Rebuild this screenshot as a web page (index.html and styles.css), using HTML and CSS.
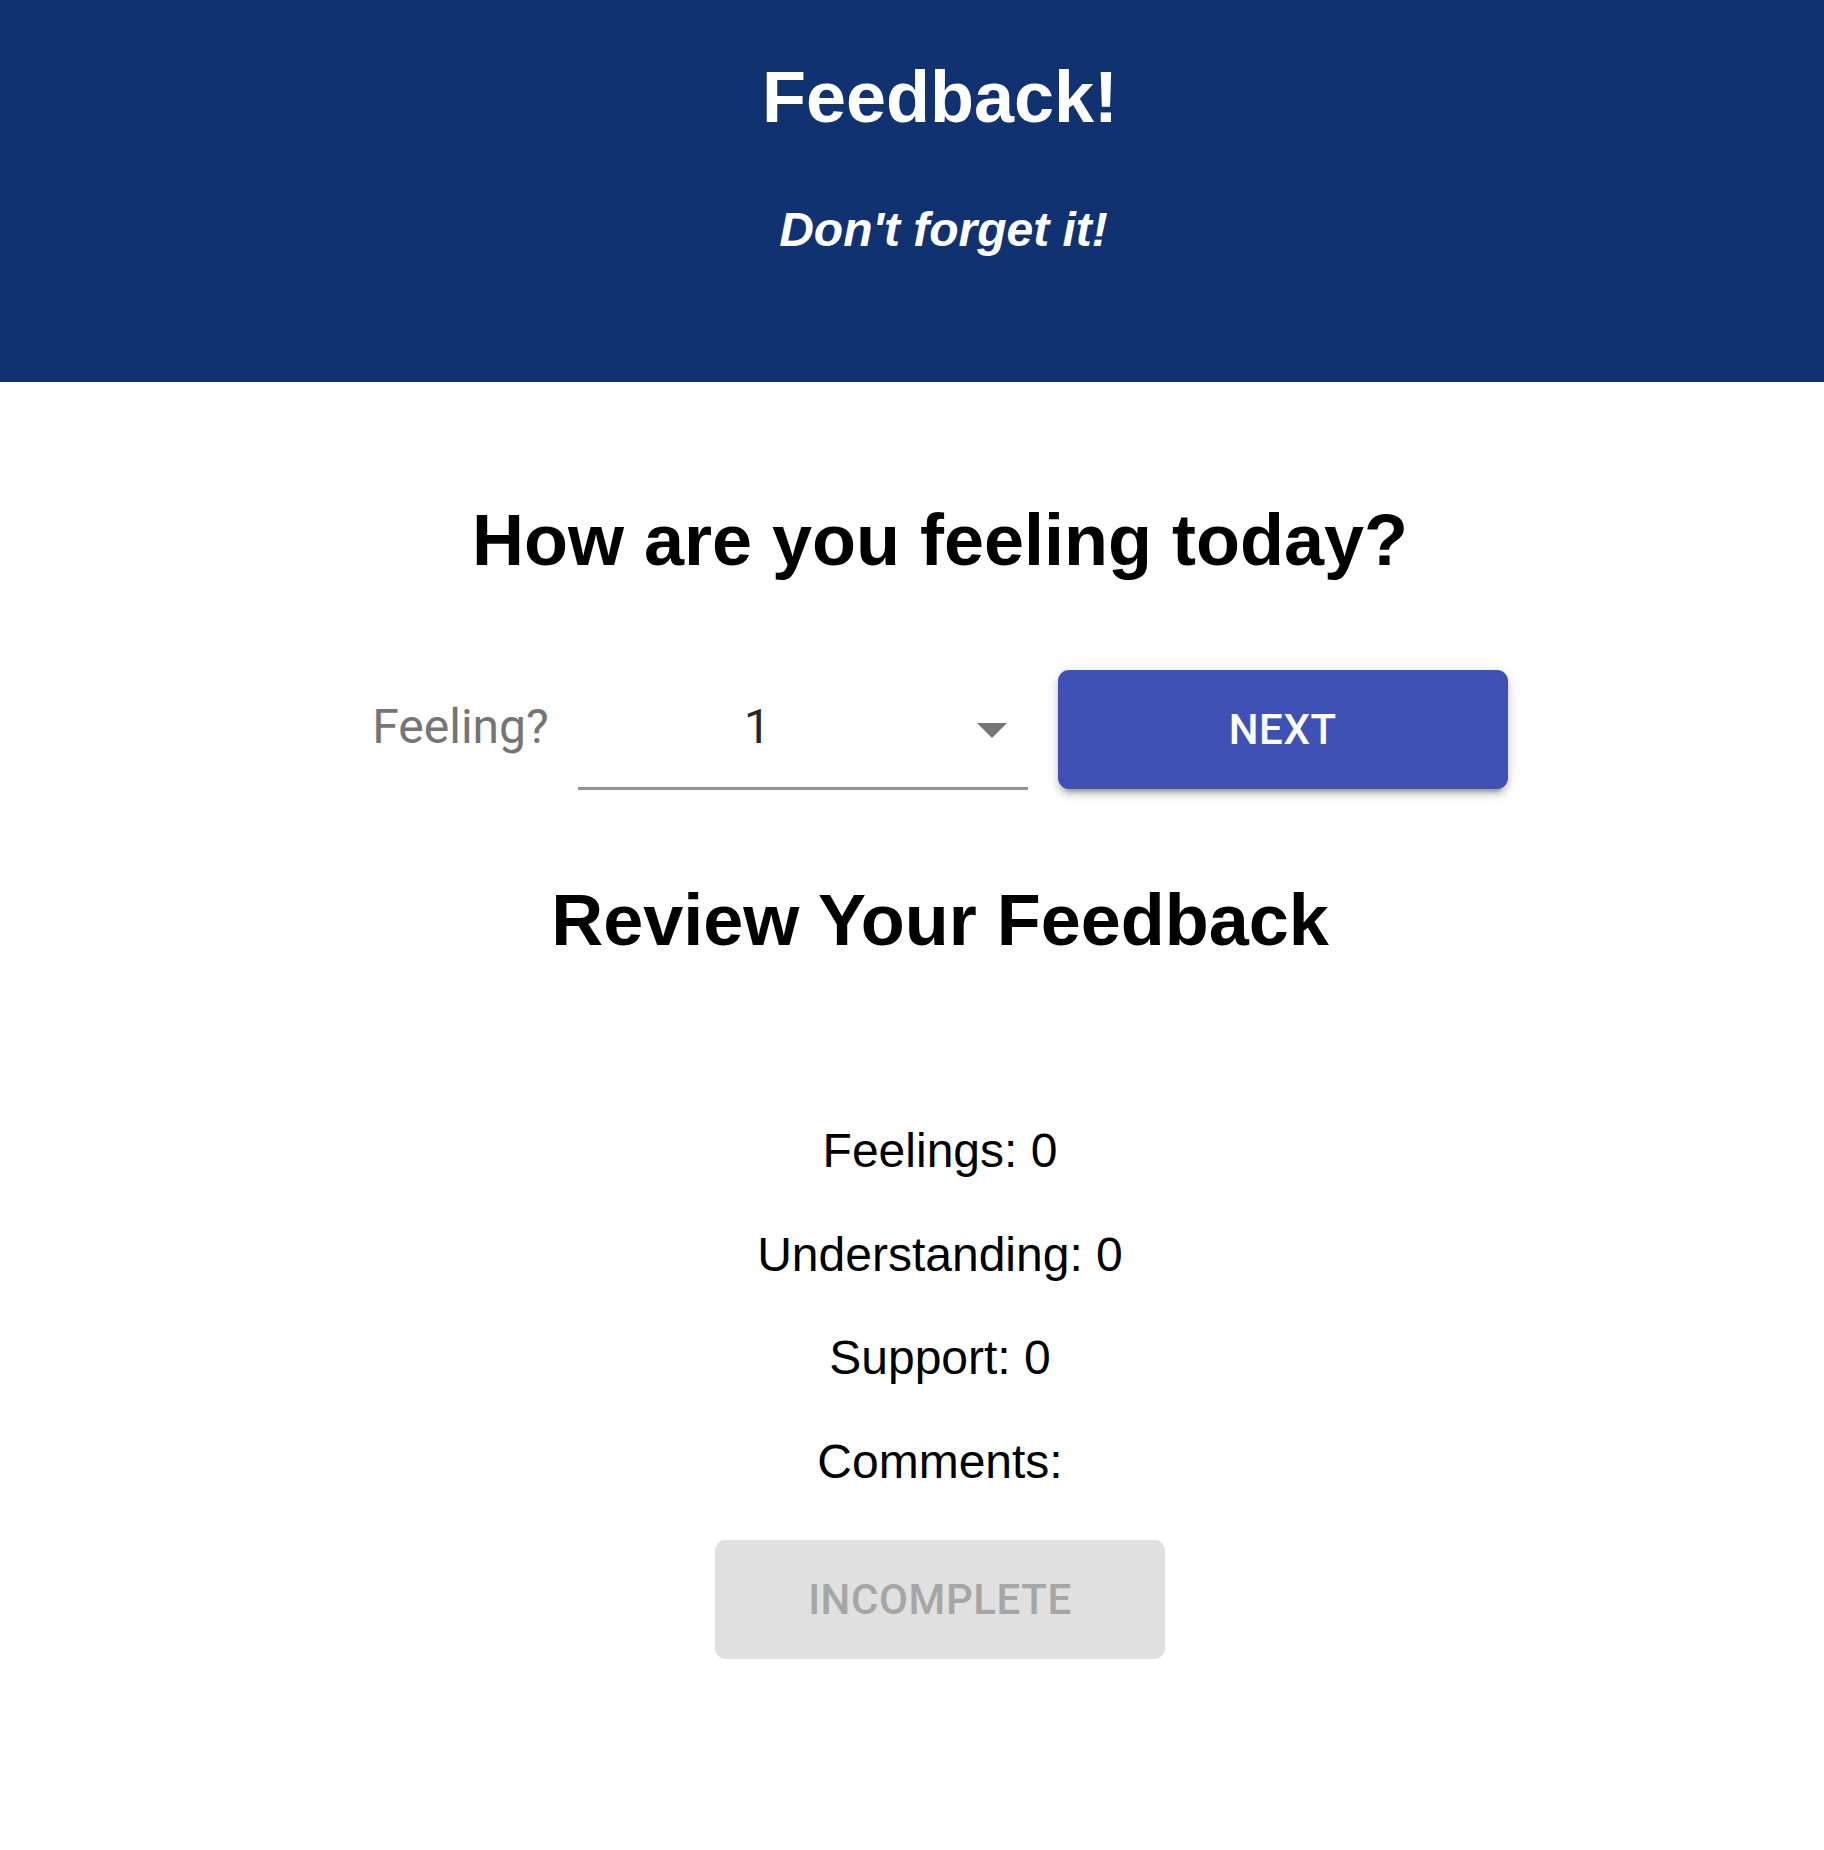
FILE: index.html
```html
<!DOCTYPE html>
<html lang="en">
<head>
<meta charset="utf-8">
<title>Feedback!</title>
<link rel="stylesheet" href="styles.css">
</head>
<body>
<header class="app-header">
  <h1 class="app-title">Feedback!</h1>
  <h4 class="app-subtitle">Don't forget it!</h4>
</header>
<main class="app-main">
  <h1 class="section-title title-feeling">How are you feeling today?</h1>
  <div class="form-row">
    <label class="field-label">Feeling?</label>
    <div class="select">
      <div class="select-value">1</div>
      <svg class="select-icon" viewBox="0 0 24 24" width="72" height="72" aria-hidden="true"><path d="M7 10l5 5 5-5z" fill="#757575"/></svg>
    </div>
    <button class="btn btn-primary">Next</button>
  </div>
  <h1 class="section-title title-review">Review Your Feedback</h1>
  <div class="review-list">
    <p class="review-item">Feelings: 0</p>
    <p class="review-item">Understanding: 0</p>
    <p class="review-item">Support: 0</p>
    <p class="review-item">Comments: </p>
  </div>
  <button class="btn btn-disabled" disabled>Incomplete</button>
</main>
</body>
</html>
```

FILE: styles.css
```css
html, body {
  margin: 0;
  padding: 0;
  background: #ffffff;
}

body {
  font-family: "Liberation Sans", Arial, Helvetica, sans-serif;
  color: #000000;
}

.app-header {
  background: #113271;
  height: 382px;
  box-sizing: border-box;
  padding: 61px 0 0 56px;
  text-align: center;
  color: #ffffff;
}

.app-title {
  margin: 0;
  font-size: 72px;
  line-height: 72px;
  font-weight: 700;
}

.app-subtitle {
  margin: 73px 0 0;
  padding-left: 7px;
  font-size: 48px;
  line-height: 48px;
  font-weight: 700;
  font-style: italic;
}

.app-main {
  padding: 0 0 100px 56px;
  display: flex;
  flex-direction: column;
  align-items: center;
}

.section-title {
  margin: 0;
  font-size: 72px;
  line-height: 72px;
  font-weight: 700;
  text-align: center;
}

.title-feeling {
  margin-top: 122px;
}

.form-row {
  margin-top: 94px;
  display: flex;
  align-items: flex-end;
  justify-content: center;
}

.field-label {
  font-family: Roboto, "Liberation Sans", sans-serif;
  font-size: 48px;
  line-height: 48px;
  color: #757575;
  margin: 0 29px 39px 0;
}

.select {
  width: 450px;
  height: 117px;
  border-bottom: 3px solid #949494;
  display: flex;
  align-items: flex-start;
  font-family: Roboto, "Liberation Sans", sans-serif;
}

.select-value {
  flex: 1;
  padding: 33px 0 0 166px;
  font-size: 48px;
  line-height: 48px;
  color: rgba(0, 0, 0, 0.87);
}

.select-icon {
  margin-top: 23px;
  flex: none;
}

.btn {
  width: 450px;
  height: 119px;
  border: none;
  border-radius: 11px;
  font-family: Roboto, "Liberation Sans", sans-serif;
  font-weight: 500;
  font-size: 42px;
  letter-spacing: 0.6px;
  text-transform: uppercase;
  padding: 0;
}

.btn-primary {
  margin: 0 0 1px 30px;
  background: #3f51b5;
  color: #ffffff;
  box-shadow: 0 9px 3px -6px rgba(0, 0, 0, 0.2), 0 6px 6px 0 rgba(0, 0, 0, 0.14), 0 3px 15px 0 rgba(0, 0, 0, 0.12);
}

.btn-disabled {
  margin-top: 50px;
  background: #e0e0e0;
  color: #a6a6a6;
}

.title-review {
  margin-top: 94px;
}

.review-list {
  margin-top: 167px;
  text-align: center;
}

.review-item {
  margin: 0 0 47.5px;
  font-size: 48px;
  line-height: 56px;
}

.review-item:last-child {
  margin-bottom: 0;
}
```
